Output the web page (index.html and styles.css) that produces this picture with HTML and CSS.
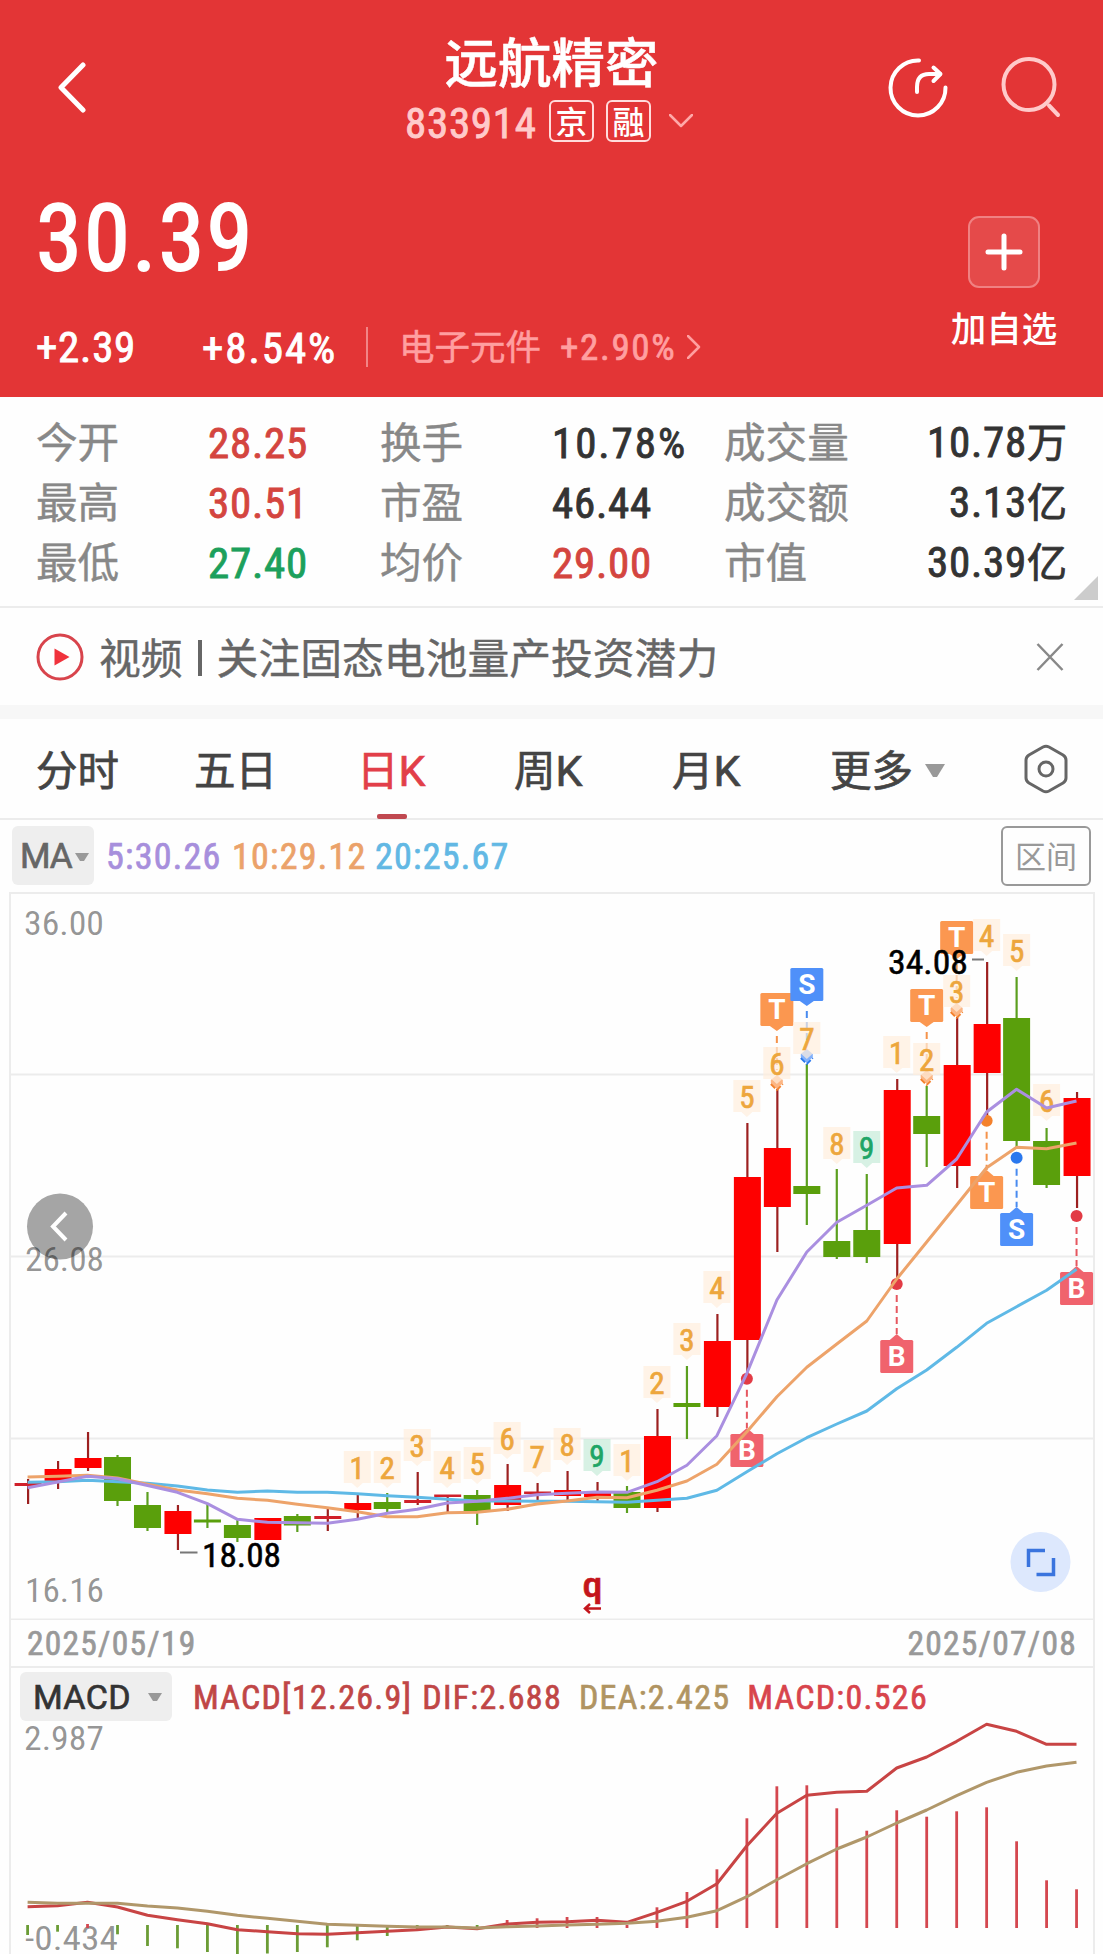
FILE: index.html
```html
<!DOCTYPE html>
<html lang="zh">
<head>
  <meta charset="UTF-8">
  <title>远航精密 833914</title>
  <link rel="stylesheet" href="styles.css">
</head>
<body>

  <header class="quote">
    <div class="navbar">
      <svg class="back" width="30" height="52" viewBox="0 0 30 52"><path d="M26 4 4 26.500 26 49"/></svg>
      <div class="stock">
        <h1>远航精密</h1>
        <div class="code">
          <span class="num">833914</span>
          <span class="badge">京</span>
          <span class="badge">融</span>
          <svg class="chevron" width="24" height="14" viewBox="0 0 24 14"><path d="M1 1 12 12 23 1"/></svg>
        </div>
      </div>
      <div class="tools">
        <svg class="share" width="62" height="64" viewBox="0 0 62 64">
          <path d="M32 4.500A27.500 27.500 0 1 0 58.500 31.500"/>
          <path d="M30 36V31Q30 18 42 18H53"/>
          <path d="M46.500 11.500 53.500 18 46.500 25"/>
        </svg>
        <svg class="search" width="62" height="64" viewBox="0 0 62 64">
          <circle cx="29" cy="28.500" r="25.500"/>
          <path d="M49 49.500 58 59"/>
        </svg>
      </div>
    </div>

    <div class="price-area">
      <div>
        <div class="price num">30.39</div>
        <div class="changes">
          <span class="num change">+2.39</span>
          <span class="num percent">+8.54%</span>
          <span class="industry">电子元件</span>
          <span class="num industry-change">+2.90%</span>
          <svg class="more" width="14" height="24" viewBox="0 0 14 24"><path d="M1 1 12 12 1 23"/></svg>
        </div>
      </div>
      <div class="add">
        <div class="add-btn">
          <svg width="38" height="38" viewBox="0 0 38 38"><path d="M19 3V35M3 19H35"/></svg>
        </div>
        <span>加自选</span>
      </div>
    </div>
  </header>

  <section class="stats">
    <span>今开</span><b class="num up">28.25</b><span>换手</span><b class="num rate">10.78%</b><span>成交量</span><b class="num right">10.78<i>万</i></b>
    <span>最高</span><b class="num up">30.51</b><span>市盈</span><b class="num">46.44</b><span>成交额</span><b class="num right">3.13<i>亿</i></b>
    <span>最低</span><b class="num down">27.40</b><span>均价</span><b class="num up">29.00</b><span>市值</span><b class="num right">30.39<i>亿</i></b>
    <div class="corner"></div>
  </section>

  <section class="news">
    <svg width="48" height="48" viewBox="0 0 48 48">
      <circle cx="24" cy="24" r="22" fill="none" stroke="#d8444c" stroke-width="3"/>
      <path d="M18.500 15.500V32.500L33.500 24Z" fill="#f0323c"/>
    </svg>
    <p>视频<em></em>关注固态电池量产投资潜力</p>
    <svg class="close" width="28" height="28" viewBox="0 0 28 28"><path d="M1.500 1 26.500 27M26.500 1 1.500 27"/></svg>
  </section>

  <nav class="tabs">
    <span>分时</span>
    <span>五日</span>
    <span class="active">日<i>K</i></span>
    <span>周<i>K</i></span>
    <span>月<i>K</i></span>
    <span>更多</span>
    <svg class="caret" width="22" height="15" viewBox="0 0 22 15"><path d="M1 1H21L13 14H9Z" fill="#999"/></svg>
    <svg class="setting" width="46" height="50" viewBox="0 0 46 50">
      <path d="M20 3 Q23 1.500 26 3L40 11Q43 13 43 16V34Q43 37 40 39L26 47Q23 48.500 20 47L6 39Q3 37 3 34V16Q3 13 6 11Z"/>
      <circle cx="23" cy="25" r="7"/>
    </svg>
  </nav>

  <div class="ma-bar">
    <div class="select ma-select num">MA<svg width="14" height="10" viewBox="0 0 14 10"><path d="M0 1H14L9 9H5Z" fill="#999"/></svg></div>
    <span class="num ma5">5:30.26</span>
    <span class="num ma10">10:29.12</span>
    <span class="num ma20">20:25.67</span>
    <div class="range">区间</div>
  </div>

  <div class="charts">
    <svg id="kline" width="1103" height="728" viewBox="0 892 1103 728"></svg>
    <div class="dates num">
      <span>2025/05/19</span>
      <span>2025/07/08</span>
    </div>
    <div class="macd-head num">
      <div class="select macd-select">MACD<svg width="14" height="10" viewBox="0 0 14 10"><path d="M0 1H14L9 9H5Z" fill="#999"/></svg></div>
      <span class="dif param">MACD[12.26.9]</span>
      <span class="dif">DIF:2.688</span>
      <span class="dea">DEA:2.425</span>
      <span class="macd">MACD:0.526</span>
    </div>
    <svg id="macd" width="1103" height="230" viewBox="0 1724 1103 230"></svg>
  </div>

  <script src="chart.js"></script>
</body>
</html>
```
FILE: styles.css
```css
* {
  box-sizing: border-box;
}

body {
  margin: 0;
  width: 1103px;
  height: 1954px;
  overflow: hidden;
  background: #fefefe;
  color: #333;
  font-family: "Noto Sans CJK SC", sans-serif;
}

svg {
  display: block;
  flex: none;
}

.num {
  font-family: Roboto, "Noto Sans CJK SC", sans-serif;
  font-weight: 400;
  font-stretch: 85%;
  letter-spacing: 0.017em;
  -webkit-text-stroke: 0.02em;
  white-space: nowrap;
}

/* header */
.quote {
  height: 397px;
  background: #e33536;
  color: #fff;
}

.navbar {
  height: 180px;
  display: grid;
  grid-template-columns: 300px 1fr 300px;
}

.back,
.share,
.search,
.chevron,
.more,
.add-btn path {
  fill: none;
  stroke: #fff;
  stroke-width: 5;
  stroke-linecap: round;
  stroke-linejoin: round;
}

.back {
  margin: 61px 0 0 57px;
}

.stock {
  padding-top: 30px;
}

.stock h1 {
  margin: 0;
  font-size: 53.5px;
  line-height: 60px;
  font-weight: 500;
  -webkit-text-stroke: 0.5px;
  text-align: center;
}

.code {
  display: flex;
  align-items: center;
  height: 44px;
  margin-top: 9px;
  padding-left: 105px;
}

.code .num {
  width: 144px;
  padding-top: 4px;
  font-size: 43px;
  color: #ffcaca;
}

.badge {
  width: 45px;
  height: 42px;
  margin-right: 12px;
  border: 2px solid #ffdcdc;
  border-radius: 6px;
  font-size: 32px;
  line-height: 36px;
  font-weight: 500;
  text-align: center;
}

.chevron {
  margin-left: 6px;
  stroke: #ffa9a9;
  stroke-width: 2.5;
}

.tools {
  display: flex;
  padding: 56px 0 0 84px;
  gap: 51px;
}

.share {
  stroke-width: 4;
}

.search {
  stroke: #ffcaca;
  stroke-width: 4;
}

.price-area {
  display: flex;
  justify-content: space-between;
  padding-left: 36px;
}

.price {
  margin-top: 4px;
  font-size: 93px;
  line-height: 110px;
  letter-spacing: 0.022em;
}

.changes {
  display: flex;
  align-items: center;
  height: 42px;
  margin-top: 32px;
  font-size: 43px;
}

.change {
  width: 166px;
}

.percent {
  width: 166px;
  height: 40px;
  line-height: 43px;
  letter-spacing: 0.045em;
  border-right: 2px solid #f28586;
}

.industry {
  width: 192px;
  padding: 0 0 6px 31px;
  font-size: 35.5px;
  -webkit-text-stroke: 0.5px;
  color: #ff9fa0;
}

.industry-change {
  width: 127px;
  font-size: 37px;
  letter-spacing: 0.045em;
  color: #ff9fa0;
}

.more {
  stroke: #ff9fa0;
  stroke-width: 2.5;
}

.add {
  width: 198px;
  padding-top: 36px;
  display: flex;
  flex-direction: column;
  align-items: center;
  font-size: 35.5px;
  line-height: 44px;
  font-weight: 500;
}

.add-btn {
  width: 72px;
  height: 72px;
  margin-bottom: 17px;
  padding: 15px;
  border: 2px solid #f08182;
  border-radius: 11px;
  background: #e54a4a;
}

/* stats */
.stats {
  position: relative;
  height: 211px;
  padding: 16px 36px 0;
  display: grid;
  grid-template-columns: 172px 172px 172px 172px 130px 1fr;
  grid-auto-rows: 60px;
  align-items: center;
  border-bottom: 2px solid #ececec;
  font-size: 41.6px;
  line-height: 60px;
  color: #888;
}

.stats span {
  padding-bottom: 6px;
  white-space: nowrap;
  -webkit-text-stroke: 0.4px;
}

.stats b {
  font-size: 43px;
  color: #333;
}

.stats .up {
  color: #d4453f;
}

.stats .down {
  color: #1ca05c;
}

.stats .rate {
  letter-spacing: 0.045em;
}

.stats .right {
  text-align: right;
}

.stats i {
  font-style: normal;
  font-size: 40px;
  letter-spacing: 0;
}

.corner {
  position: absolute;
  right: 5px;
  bottom: 6px;
  border-left: 24px solid transparent;
  border-bottom: 24px solid #ccc;
}

.news {
  display: flex;
  align-items: center;
  height: 111px;
  padding: 0 39px 0 36px;
  border-bottom: 14px solid #f7f7f7;
}

.news p {
  display: flex;
  align-items: center;
  flex: 1;
  margin: 0 0 2px 15px;
  font-size: 41.8px;
  line-height: 60px;
  -webkit-text-stroke: 0.4px;
  color: #666;
}

.news em {
  width: 4px;
  height: 36px;
  margin: 4px 15px 0 15px;
  background: #666;
}

.close {
  fill: none;
  stroke: #888;
  stroke-width: 2.5;
}

.tabs {
  display: flex;
  align-items: center;
  height: 101px;
  padding-left: 36px;
  border-bottom: 2px solid #ececec;
  font-size: 41.5px;
  -webkit-text-stroke: 0.7px;
  color: #444;
}

.tabs span {
  width: 158px;
  height: 102px;
  line-height: 100px;
}

.tabs span:nth-child(3) {
  margin-left: 5px;
  width: 157px;
}

.tabs span:nth-child(6) {
  width: 94px;
}

.tabs i {
  font-family: Roboto, sans-serif;
  font-style: normal;
  font-size: 43px;
}

.tabs .active {
  position: relative;
  color: #e23f49;
}

.active::after {
  content: "";
  position: absolute;
  left: 20px;
  bottom: 1px;
  width: 30px;
  height: 5px;
  border-radius: 2px;
  background: #c04850;
}

.caret {
  margin-top: 3px;
}

.setting {
  margin-left: 77px;
  fill: none;
  stroke: #666;
  stroke-width: 3;
}

.ma-bar {
  display: flex;
  align-items: center;
  height: 72px;
  padding: 0 12px 1px;
  font-size: 36px;
}

.select {
  display: flex;
  align-items: center;
  border-radius: 6px;
  background: #eee;
}

.ma-select {
  width: 82px;
  height: 59px;
  padding: 2px 0 0 8px;
  gap: 3px;
  font-size: 35px;
  font-stretch: 100%;
  letter-spacing: -0.03em;
  color: #666;
}

.ma-bar span {
  padding-top: 2px;
  letter-spacing: 0.035em;
}

.ma5 {
  width: 126px;
  margin-left: 12px;
  color: #a78fdc;
}

.ma10 {
  width: 143px;
  color: #eba26a;
}

.ma20 {
  color: #62b8e4;
}

.range {
  width: 90px;
  height: 60px;
  margin-left: auto;
  border: 2px solid #999;
  border-radius: 6px;
  font-size: 31px;
  line-height: 54px;
  text-align: center;
  color: #999;
}

/* charts */
.dates {
  display: flex;
  justify-content: space-between;
  height: 48px;
  margin: 0 8px 0 9px;
  padding: 0 16px;
  border: 2px solid #ececec;
  border-top: 0;
  font-size: 33.5px;
  letter-spacing: 0.037em;
  line-height: 48px;
  color: #999;
}

.macd-head {
  display: flex;
  align-items: center;
  height: 56px;
  margin: 0 8px 0 9px;
  padding-left: 9px;
  border: solid #ececec;
  border-width: 0 2px;
  font-size: 34px;
  letter-spacing: 0.037em;
}

.macd-select {
  width: 152px;
  height: 49px;
  padding: 2px 0 0 13px;
  gap: 17px;
  font-stretch: 100%;
  letter-spacing: 0.01em;
  color: #333;
}

.macd-head span {
  margin: 2px 17px 0 0;
}

.dif {
  color: #c04646;
}

.macd-head .param {
  margin: 2px 10px 0 21px;
}

.dea {
  color: #b09462;
}

.macd {
  color: #d8444c;
}

.charts text {
  font-family: Roboto, sans-serif;
  font-stretch: 85%;
}

.grid {
  fill: none;
  stroke: #ececec;
  stroke-width: 2;
}

.axis {
  font-size: 33.5px;
  fill: #000;
  fill-opacity: 0.42;
}

.line {
  fill: none;
  stroke-width: 3;
  stroke-linejoin: round;
}

.peak {
  font-size: 33px;
  fill: #000;
  stroke: #000;
  stroke-width: 0.5;
}

.count {
  font-size: 31px;
  stroke-width: 0.7;
  text-anchor: middle;
}

.flag {
  font-size: 28px;
  font-weight: 700;
  text-anchor: middle;
  fill: #fff;
}

.charts .flag {
  font-stretch: 100%;
}
```
FILE: chart.js
```js
const NS = 'http://www.w3.org/2000/svg';
const kline = document.getElementById('kline');
const macd = document.getElementById('macd');

const X = i => 27.6 + i * 29.97;

function add(parent, tag, attrs, text) {
  const el = document.createElementNS(NS, tag);
  for (const k in attrs) el.setAttribute(k, attrs[k]);
  if (text !== undefined) el.textContent = text;
  parent.appendChild(el);
  return el;
}

function line(parent, points, color) {
  const pts = points.map((y, i) => `${X(i).toFixed(1)},${y}`).join(' ');
  add(parent, 'polyline', { class: 'line', points: pts, stroke: color });
}

function label(parent, x, y, width, text, cls) {
  add(parent, 'text', { x, y, class: cls, textLength: width, lengthAdjust: 'spacingAndGlyphs' }, text);
}

// high, body top, body bottom, low, 1 = up
const candles = [
  [1479, 1483, 1486, 1504, 1], [1461, 1469, 1481, 1489, 1], [1432, 1458, 1468, 1471, 1], [1455, 1457, 1501, 1506, 0],
  [1492, 1505, 1528, 1531, 0], [1505, 1511, 1534, 1550, 1], [1504, 1519.500, 1522.500, 1528, 0], [1519, 1525, 1538, 1542, 0],
  [1518, 1518, 1540, 1540, 1], [1514, 1516, 1525.500, 1532, 0], [1508, 1516, 1519, 1531, 1], [1494, 1503, 1510, 1518, 1],
  [1493, 1502, 1509, 1512, 0], [1472, 1500, 1503, 1505, 1], [1495, 1494.500, 1497, 1512, 1], [1490, 1495, 1511, 1525, 0],
  [1464, 1485, 1505, 1511, 1], [1483, 1491.500, 1494, 1502, 1], [1471, 1490, 1496, 1500, 1], [1482, 1493, 1497, 1503, 1],
  [1486, 1492, 1508, 1513, 0], [1409, 1436, 1508, 1512, 1], [1366, 1403, 1407, 1439, 0], [1314, 1341, 1407, 1417, 1],
  [1123, 1177, 1340, 1376, 1], [1089, 1148, 1207, 1252, 1], [1064, 1186, 1194, 1225, 0], [1169, 1241, 1257, 1259, 0],
  [1174, 1230, 1257, 1263, 0], [1079, 1090, 1244, 1278, 1], [1086, 1116, 1134, 1167, 0], [1017, 1065, 1166, 1188, 1],
  [962, 1024, 1073, 1115, 1], [977, 1018, 1141, 1148, 0], [1128, 1141, 1185, 1188, 0], [1092, 1098, 1176, 1208, 1]
];

const ma5 = [1487.700, 1482, 1476.300, 1478.700, 1485.500, 1492.300, 1503.700, 1519.300, 1522.300, 1522.700, 1523.300, 1519.300,
  1513.300, 1509.300, 1503, 1501.300, 1498.300, 1494.700, 1493.300, 1492, 1492.300, 1481.700, 1465.300, 1435.700,
  1373.300, 1300, 1252, 1222.300, 1205.300, 1188, 1185.300, 1159, 1112, 1089.300, 1108, 1101];
const ma10 = [1477, 1476.300, 1475.300, 1478, 1484.300, 1490, 1493.700, 1498.300, 1500.300, 1504.300, 1507.700, 1511.700,
  1516.700, 1516.700, 1512.700, 1512.300, 1509.300, 1504, 1501, 1497.300, 1497.700, 1490.300, 1481, 1464.300,
  1431.700, 1396.700, 1367.300, 1344, 1321, 1279, 1242, 1205, 1167.700, 1147.300, 1148.700, 1143];
const ma20 = [1482.300, 1481.700, 1480.300, 1481.700, 1483.300, 1486, 1490, 1492.300, 1491, 1492.300, 1492.300, 1493.700,
  1495.700, 1497.300, 1499.300, 1501, 1501, 1501.300, 1501.300, 1501.700, 1502.300, 1500.300, 1498.300, 1490.300,
  1471.700, 1453.700, 1437.700, 1424, 1411, 1388.700, 1370, 1347.300, 1323.300, 1306.700, 1290.300, 1269.300];

// 九转 counts: index, top, number
const counts = [
  [11, 1451, 1], [12, 1451, 2], [13, 1429, 3], [14, 1451, 4], [15, 1447, 5], [16, 1422, 6], [17, 1440, 7],
  [18, 1428, 8], [19, 1439, 9], [20, 1444, 1], [21, 1366, 2], [22, 1323, 3], [23, 1271, 4], [24, 1080, 5],
  [25, 1047, 6], [26, 1022, 7], [27, 1127, 8], [28, 1131, 9], [29, 1036, 1], [30, 1043, 2], [31, 975, 3],
  [32, 919, 4], [33, 934, 5], [34, 1084, 6]
];

const flagColors = { B: ['#f0636d', '#e23b45'], S: ['#4f90f9', '#2a78ee'], T: ['#fb9750', '#f4812c'] };

// index, type, box top, point y
const flags = [
  [25, 'T', 993, 1082], [26, 'S', 968, 1056], [30, 'T', 989, 1077], [31, 'T', 921, 1010],
  [24, 'B', 1434, 1378.700], [29, 'B', 1340, 1284], [35, 'B', 1272, 1216], [32, 'T', 1176, 1120.700], [33, 'S', 1213, 1157.700]
];

function drawFlag([i, type, top, point]) {
  const x = X(i);
  const [fill, dark] = flagColors[type];
  const above = top < point;
  add(kline, 'line', {
    x1: x, x2: x, y1: above ? top + 43 : point + 11, y2: above ? point - 12 : top - 6,
    stroke: dark, 'stroke-width': 2, 'stroke-dasharray': '7 4', opacity: 0.850
  });
  if (above) {
    add(kline, 'path', { d: `M${x - 6} ${point - 2}l6 -5 6 5v3l-6 6 -6 -6z`, fill, opacity: 0.700 });
    add(kline, 'path', { d: `M${x - 6} ${point + 2}l6 6 6 -6`, fill: 'none', stroke: dark, 'stroke-width': 1.800, 'stroke-dasharray': '6 2' });
  } else {
    add(kline, 'circle', { cx: x, cy: point, r: 6, fill: dark });
  }
  const tail = above ? `M${x - 7} ${top + 33}l7 5 7 -5z` : `M${x - 7} ${top}l7 -6 7 6z`;
  add(kline, 'path', { d: tail, fill });
  add(kline, 'rect', { x: x - 16.500, y: top, width: 33, height: 33, rx: 1.500, fill });
  add(kline, 'text', { x, y: top + 26, class: 'flag' }, type);
}

function drawCount([i, top, n]) {
  const x = X(i);
  const green = n === 9;
  const fill = green ? '#c6ebd9' : '#ffeedd';
  const color = green ? '#1ea566' : '#eda63c';
  add(kline, 'path', { d: `M${x - 13.500} ${top}h27v32h-8l-5.500 5 -5.500 -5h-8z`, fill, opacity: 0.700 });
  add(kline, 'text', { x, y: top + 28, class: 'count', fill: color, stroke: color }, n);
}

// grid
add(kline, 'path', { class: 'grid', d: 'M10 1620V893H1094V1620M10 1074.500H1094M10 1256.500H1094M10 1438.500H1094M10 1619.500H1094' });

candles.forEach(([high, top, bottom, low, up], i) => {
  const x = X(i) + (up ? 0.500 : 0);
  add(kline, 'line', { x1: x, x2: x, y1: high, y2: low, stroke: up ? '#9c2020' : '#5b9f1f', 'stroke-width': 2.200 });
  const thin = bottom - top < 4;
  add(kline, 'rect', {
    x: x - 13.500, y: top, width: 27, height: Math.max(bottom - top, 2.500),
    fill: up ? (thin ? '#d0202a' : '#fe0000') : '#5a9f0c'
  });
});

flags.forEach(drawFlag);
counts.forEach(drawCount);

line(kline, ma20, '#5fb9e6');
line(kline, ma10, '#eda36a');
line(kline, ma5, '#aa8fe0');

// high and low of the period
add(kline, 'path', { d: 'M972 959.500H984M180 1552.500H197.500', stroke: '#777', 'stroke-width': 1.800 });
label(kline, 888, 973.500, 80, '34.08', 'peak');
label(kline, 202, 1566.500, 79, '18.08', 'peak');

// scroll back button
add(kline, 'circle', { cx: 60, cy: 1226.500, r: 33, fill: '#a5a5a5' });
add(kline, 'path', { d: 'M66 1213 53 1226.500 66 1240', fill: 'none', stroke: '#fff', 'stroke-width': 4 });

label(kline, 24, 935, 80, '36.00', 'axis');
label(kline, 25, 1270.500, 79, '26.08', 'axis');
label(kline, 25, 1601.500, 79, '16.16', 'axis');

// 除权 mark
add(kline, 'text', { x: 582.500, y: 1596.500, 'font-size': 35, 'font-weight': 500, fill: '#c4161c', stroke: '#c4161c', 'stroke-width': 0.500, textLength: 20, lengthAdjust: 'spacingAndGlyphs' }, 'q');
add(kline, 'path', { d: 'M601 1608.500H585M590 1604 585 1608.500 590 1613', fill: 'none', stroke: '#c4161c', 'stroke-width': 2.500 });

// full screen button
add(kline, 'circle', { cx: 1040.500, cy: 1562, r: 30, fill: '#dde8fd' });
add(kline, 'path', { d: 'M1045 1550.500H1028.500V1567M1053.500 1558V1574.500H1036.500', fill: 'none', stroke: '#3a74de', 'stroke-width': 3.500 });

// MACD
const base = 1927;
const bars = [1935, 1931.700, 1924, 1934.300, 1946, 1948.300, 1952, 1956, 1953.500, 1952, 1947.300, 1940.300, 1936, 1931,
  1927, 1929, 1920, 1918.300, 1917, 1917, 1925, 1907.300, 1892, 1869.300, 1818.300, 1786.300, 1785.300, 1808.300,
  1830.700, 1810.300, 1816.700, 1811.300, 1807.300, 1841.300, 1880.300, 1889.300];
const dif = [1906.700, 1905.700, 1902.300, 1907, 1915.300, 1919.700, 1923.700, 1929.700, 1931.700, 1933.700, 1934.300, 1932.700,
  1931.300, 1929.700, 1927, 1928.700, 1924, 1922.300, 1921.700, 1920.300, 1922.300, 1912.300, 1901.300, 1883.700,
  1845.700, 1813.300, 1795.300, 1792.300, 1791.300, 1768, 1757, 1741.300, 1724.300, 1731.300, 1744.300, 1744.300];
const dea = [1902.300, 1903.300, 1903.300, 1903.300, 1906, 1908, 1911.300, 1915.300, 1918.300, 1921.300, 1924.300, 1925.300,
  1926.300, 1927, 1927, 1928, 1926.700, 1926, 1925, 1924.300, 1923.300, 1921.300, 1917.300, 1910.700,
  1896.700, 1879.700, 1863.700, 1849, 1837, 1823, 1810, 1795.700, 1782.300, 1772.300, 1766, 1762.300];

macd.style.overflow = 'visible';
add(macd, 'path', { class: 'grid', d: 'M10 1723V1954M1094 1723V1954' });
label(macd, 24, 1749.500, 80, '2.987', 'axis');
label(macd, 25, 1949.500, 93, '-0.434', 'axis');
bars.forEach((y, i) => {
  const up = y < base;
  add(macd, 'line', { x1: X(i), x2: X(i), y1: up ? base + 1 : base - 2, y2: y, stroke: up ? '#d4474f' : '#6b9c35', 'stroke-width': 2.800 });
});
line(macd, dif, '#c84444');
line(macd, dea, '#b0976a');
```
